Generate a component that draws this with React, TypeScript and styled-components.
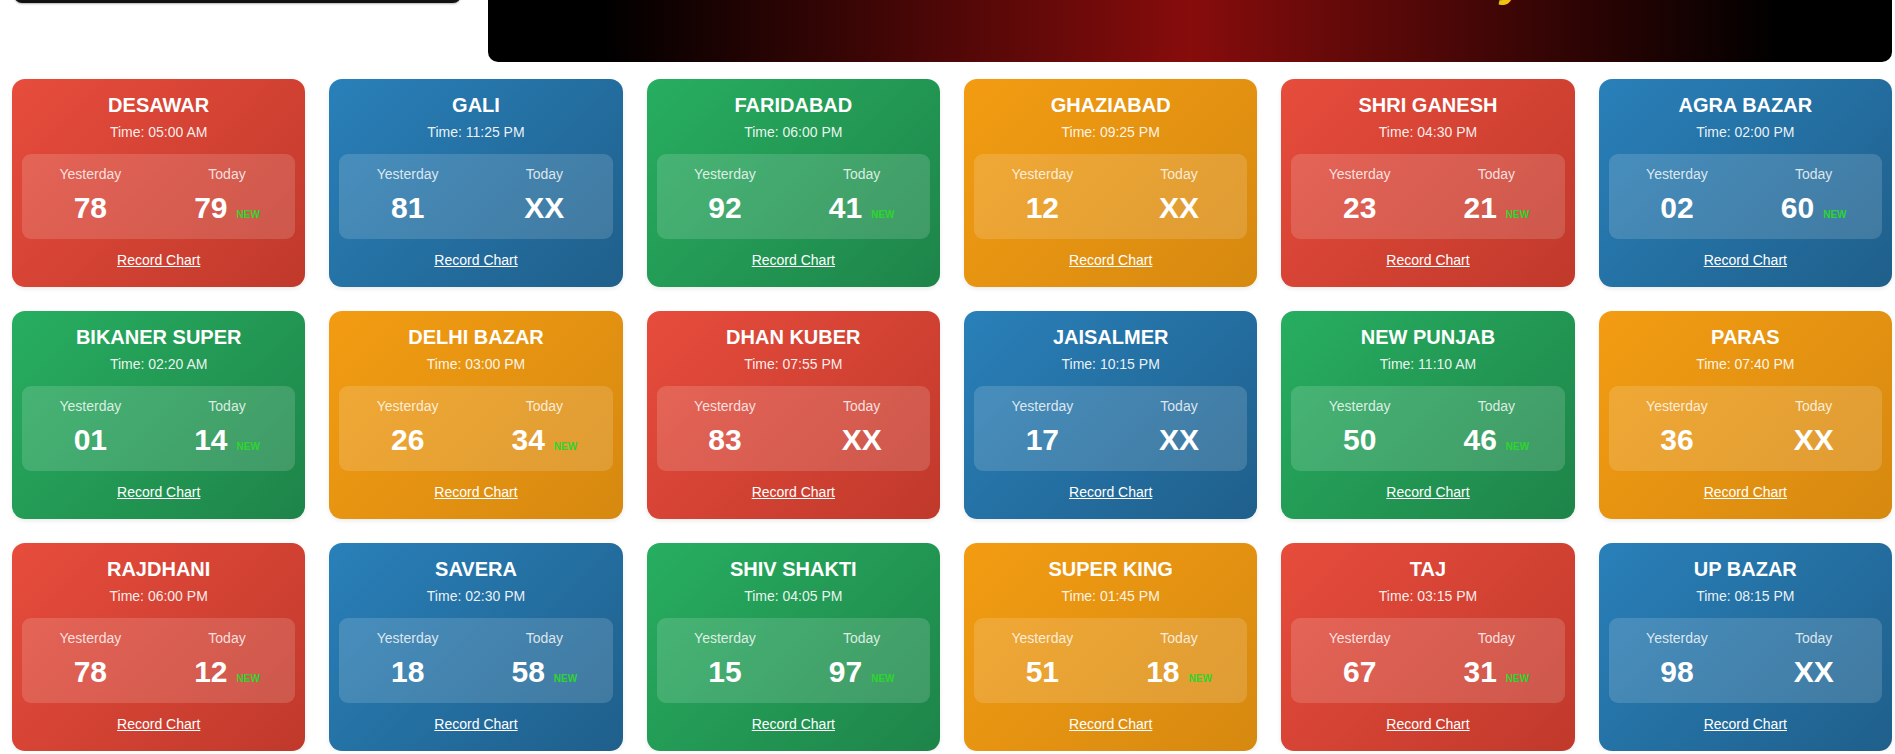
import React from 'react';
import styled, { createGlobalStyle } from 'styled-components';

const GlobalStyle = createGlobalStyle`
  html, body {
    margin: 0;
    padding: 0;
    background: #fff;
    overflow: hidden;
  }
  body {
    font-family: 'Liberation Sans', Arial, sans-serif;
  }
`;

type Tone = 'red' | 'blue' | 'green' | 'orange';

const tones: Record<Tone, string> = {
  red: 'linear-gradient(135deg, #e74c3c, #c0392b)',
  blue: 'linear-gradient(135deg, #2980b9, #1f5f8b)',
  green: 'linear-gradient(135deg, #27ae60, #1e8449)',
  orange: 'linear-gradient(135deg, #f39c12, #d68910)',
};

const Page = styled.div`
  width: 1895px;
`;

// page is shown scrolled down: only the bottom of the header is visible
const Header = styled.header`
  display: flex;
  align-items: flex-start;
  gap: 27px;
  margin-top: -240px;
  padding: 0 3px 0 14px;
`;

const SideBox = styled.div`
  width: 447px;
  height: 243px;
  background: #111;
  border-radius: 0 0 8px 8px;
  box-shadow: 0 1px 2px rgba(0, 0, 0, 0.3);
`;

const Banner = styled.div`
  flex: 1;
  height: 302px;
  box-sizing: border-box;
  padding-bottom: 56px;
  display: flex;
  flex-direction: column;
  justify-content: flex-end;
  align-items: center;
  border-radius: 10px;
  background: linear-gradient(90deg, #000 8%, #870c0c 50%, #000 92%);
  overflow: hidden;
`;

const BannerTitle = styled.h1`
  margin: 0 0 0 12px;
  font-size: 46px;
  font-weight: 700;
  font-style: italic;
  color: #f1c40f;
`;

const Grid = styled.div`
  display: grid;
  grid-template-columns: repeat(6, 1fr);
  gap: 24px;
  width: 1880px;
  margin: 17px 0 0 12px;
`;

const Card = styled.div<{ $tone: Tone }>`
  background: ${(p) => tones[p.$tone]};
  border-radius: 13px;
  padding: 15px 10px 18px;
  color: #fff;
  text-align: center;
  box-sizing: border-box;
  height: 208px;
  box-shadow: 0 2px 4px rgba(0, 0, 0, 0.08);
`;

const Name = styled.h3`
  margin: 0 0 7px;
  font-size: 20px;
  font-weight: 700;
  line-height: 23px;
`;

const Time = styled.div`
  font-size: 14px;
  line-height: 16px;
  color: rgba(255, 255, 255, 0.92);
`;

const ResultBox = styled.div`
  display: flex;
  margin: 14px 0 12px;
  padding: 12px 0 14px;
  border-radius: 9px;
  background: rgba(255, 255, 255, 0.15);
`;

const Col = styled.div`
  flex: 1;
`;

const Label = styled.div`
  font-size: 14px;
  line-height: 16px;
  color: rgba(255, 255, 255, 0.82);
`;

const Number = styled.div`
  margin-top: 9px;
  height: 34px;
  font-size: 30px;
  font-weight: 700;
  line-height: 34px;
`;

const NewTag = styled.span`
  margin-left: 9px;
  font-size: 10px;
  font-weight: 700;
  line-height: 0;
  color: #2fd52f;
`;

const ChartLink = styled.a`
  display: inline-block;
  font-size: 14px;
  line-height: 16px;
  color: #fff;
  text-decoration: underline;
`;

const games = [
  { name: 'DESAWAR', time: '05:00 AM', yesterday: '78', today: '79' },
  { name: 'GALI', time: '11:25 PM', yesterday: '81', today: 'XX' },
  { name: 'FARIDABAD', time: '06:00 PM', yesterday: '92', today: '41' },
  { name: 'GHAZIABAD', time: '09:25 PM', yesterday: '12', today: 'XX' },
  { name: 'SHRI GANESH', time: '04:30 PM', yesterday: '23', today: '21' },
  { name: 'AGRA BAZAR', time: '02:00 PM', yesterday: '02', today: '60' },
  { name: 'BIKANER SUPER', time: '02:20 AM', yesterday: '01', today: '14' },
  { name: 'DELHI BAZAR', time: '03:00 PM', yesterday: '26', today: '34' },
  { name: 'DHAN KUBER', time: '07:55 PM', yesterday: '83', today: 'XX' },
  { name: 'JAISALMER', time: '10:15 PM', yesterday: '17', today: 'XX' },
  { name: 'NEW PUNJAB', time: '11:10 AM', yesterday: '50', today: '46' },
  { name: 'PARAS', time: '07:40 PM', yesterday: '36', today: 'XX' },
  { name: 'RAJDHANI', time: '06:00 PM', yesterday: '78', today: '12' },
  { name: 'SAVERA', time: '02:30 PM', yesterday: '18', today: '58' },
  { name: 'SHIV SHAKTI', time: '04:05 PM', yesterday: '15', today: '97' },
  { name: 'SUPER KING', time: '01:45 PM', yesterday: '51', today: '18' },
  { name: 'TAJ', time: '03:15 PM', yesterday: '67', today: '31' },
  { name: 'UP BAZAR', time: '08:15 PM', yesterday: '98', today: 'XX' },
];

const order: Tone[] = ['red', 'blue', 'green', 'orange'];

const App = () => {
  return (
    <Page>
      <GlobalStyle />
      <Header>
        <SideBox />
        <Banner>
          <BannerTitle>Satta Matka Live Result Today</BannerTitle>
        </Banner>
      </Header>
      <Grid>
        {games.map((g, i) => (
          <Card key={g.name} $tone={order[i % 4]}>
            <Name>{g.name}</Name>
            <Time>Time: {g.time}</Time>
            <ResultBox>
              <Col>
                <Label>Yesterday</Label>
                <Number>{g.yesterday}</Number>
              </Col>
              <Col>
                <Label>Today</Label>
                <Number>
                  {g.today}
                  {g.today !== 'XX' && <NewTag>NEW</NewTag>}
                </Number>
              </Col>
            </ResultBox>
            <ChartLink href="#">Record Chart</ChartLink>
          </Card>
        ))}
      </Grid>
    </Page>
  );
};

export default App;
